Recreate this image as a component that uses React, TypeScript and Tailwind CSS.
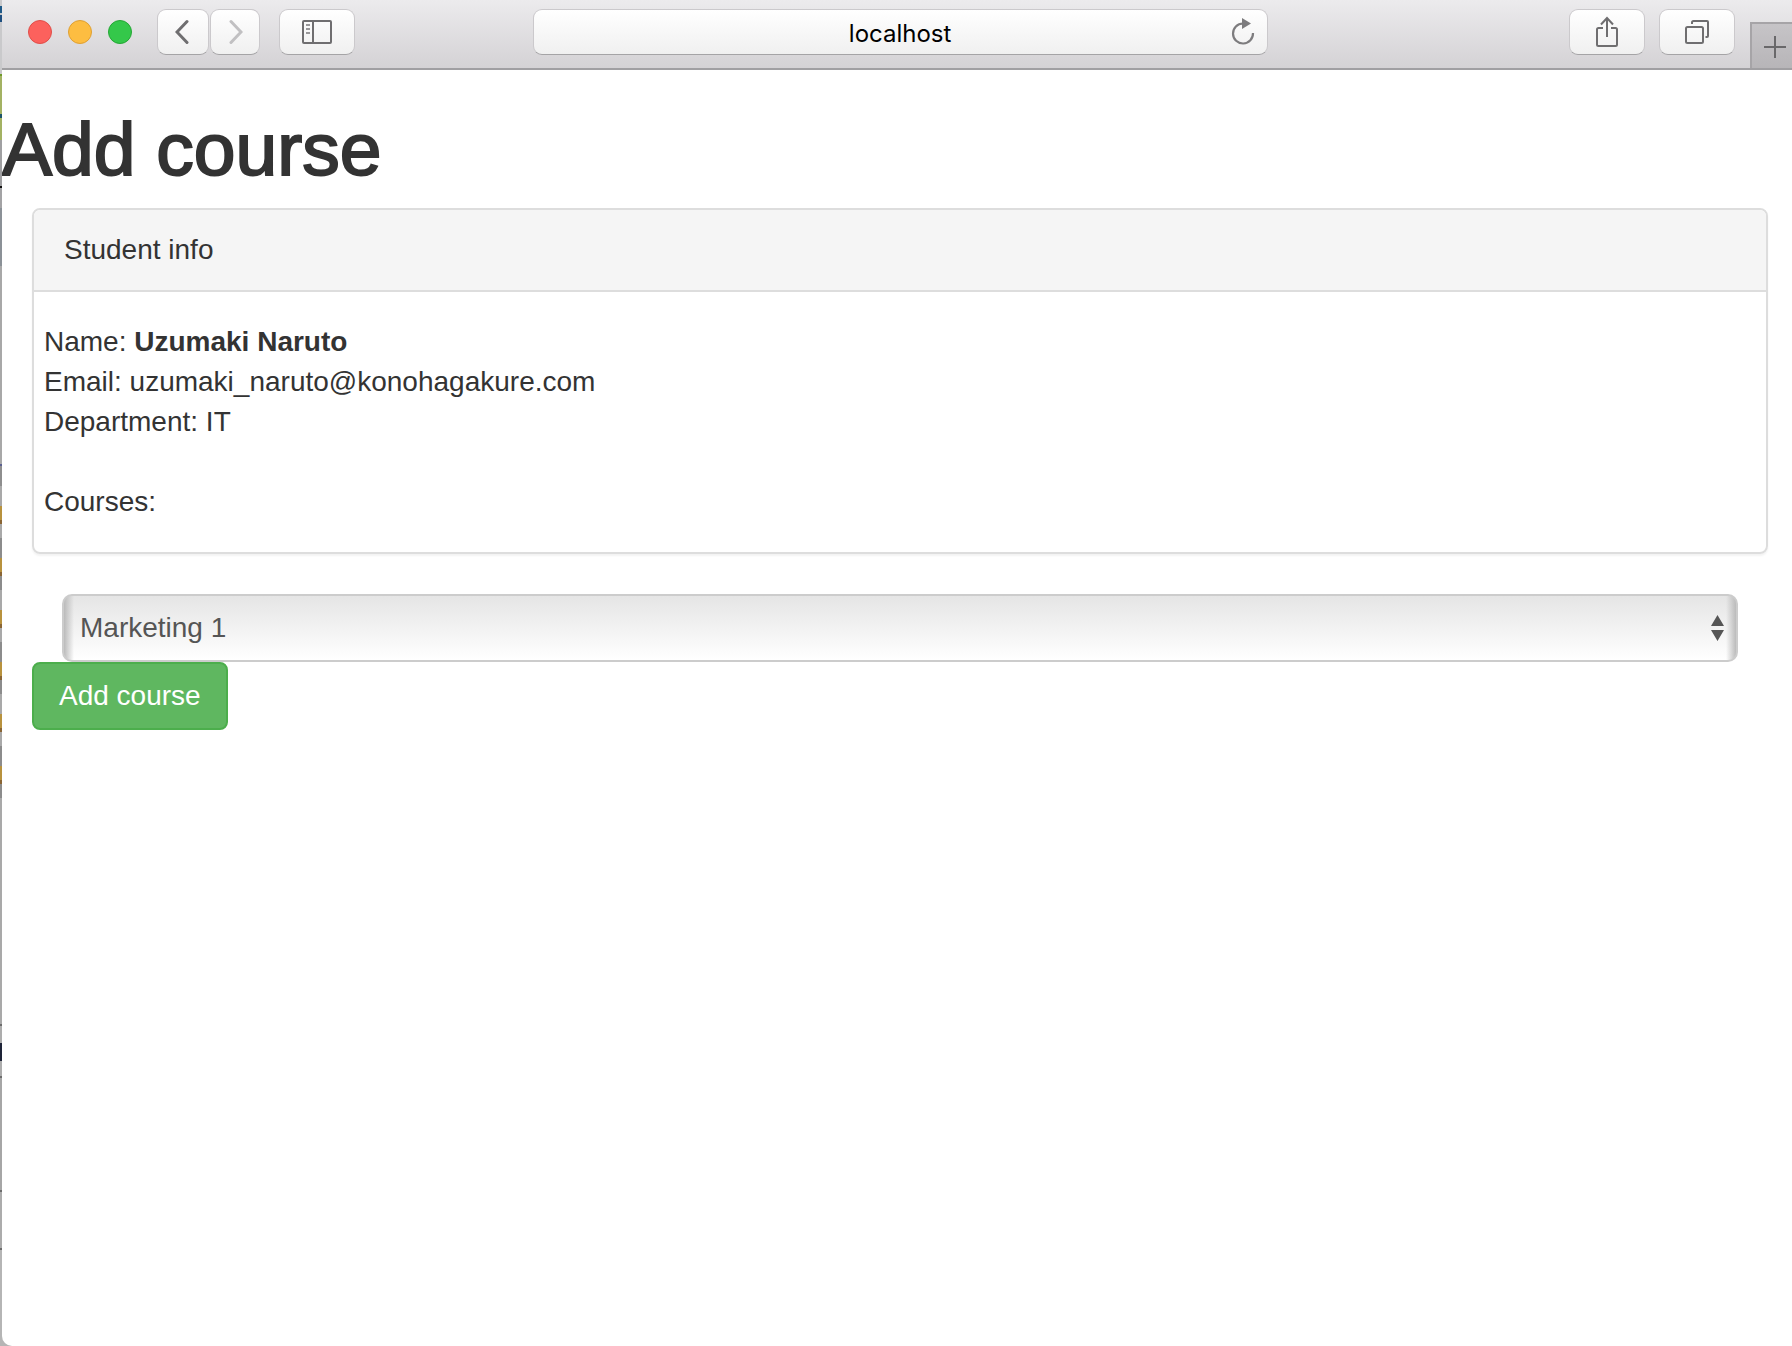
import React from "react";

const strip: [number, string][] = [
  [6, "#c9c9cb"], [7, "#1f5a88"], [2, "#c9c9cb"], [7, "#1f4f80"], [52, "#c9c9cb"], [2, "#6f9a2a"], [38, "#a3b263"], [4, "#1d5468"],
  [22, "#a3b263"], [46, "#a0a0a2"], [2, "#101010"], [20, "#a3a3a5"], [58, "#8b9197"], [198, "#a8a8a8"],
  [2, "#5a6090"], [20, "#8e8e8e"],
  [20, "#a9a9a9"], [14, "#b8923e"], [4, "#8a6534"], [14, "#a9a9a9"],
  [20, "#8c8c8c"], [14, "#b8923e"], [4, "#8a6534"], [14, "#8c8c8c"],
  [20, "#a9a9a9"], [14, "#b8923e"], [4, "#8a6534"], [14, "#a9a9a9"],
  [20, "#8c8c8c"], [14, "#b8923e"], [4, "#8a6534"], [14, "#8c8c8c"],
  [20, "#a9a9a9"], [14, "#b8923e"], [4, "#8a6534"], [14, "#a9a9a9"],
  [20, "#8c8c8c"], [14, "#b8923e"], [4, "#8a6534"], [14, "#8c8c8c"],
  [226, "#a9a9a9"], [2, "#6c6c6c"], [17, "#adadad"], [18, "#1e2438"], [15, "#adadad"], [2, "#6c6c6c"],
  [112, "#a6a6a6"], [2, "#6c6c6c"], [56, "#acacac"], [2, "#6c6c6c"],
];

const chromeButton =
  "flex h-[46px] items-center justify-center rounded-[9px] border border-[#cbc9cc] border-b-[#a5a4a6] bg-linear-to-b from-white to-[#f0f0f0] text-[#6f6e70]";

function Toolbar() {
  return (
    <header className="flex h-[70px] items-start border-b-2 border-[#a09fa2] bg-linear-to-b from-[#ecebed] to-[#d4d2d5]">
      <div className="flex gap-4 pt-5 pl-[26px]">
        <button aria-label="Close" className="size-6 rounded-full border border-[#e04e49] bg-[#fc615d]" />
        <button aria-label="Minimize" className="size-6 rounded-full border border-[#dfa033] bg-[#fdbd41]" />
        <button aria-label="Zoom" className="size-6 rounded-full border border-[#25a735] bg-[#34c84a]" />
      </div>
      <div className="ml-[25px] flex gap-px pt-[9px]">
        <button aria-label="Back" className={`${chromeButton} w-[52px]`}>
          <svg width="16" height="26" viewBox="0 0 16 26" fill="none" stroke="#6f6e70" strokeWidth="3" strokeLinecap="round"><path d="M12 2.500 2 13 12 23.500" /></svg>
        </button>
        <button aria-label="Forward" className={`${chromeButton} w-[50px]`}>
          <svg width="16" height="26" viewBox="0 0 16 26" fill="none" stroke="#c1c0c2" strokeWidth="3" strokeLinecap="round"><path d="M4 2.500 14 13 4 23.500" /></svg>
        </button>
      </div>
      <div className="ml-[19px] pt-[9px]">
        <button aria-label="Show sidebar" className={`${chromeButton} w-[76px]`}>
          <svg width="30" height="24" viewBox="0 0 30 24" fill="none" stroke="#6f6e70" strokeWidth="2">
            <rect x="1" y="1" width="28" height="22" rx="1" />
            <path d="M11 1v22" />
            <path d="M4 5h4M4 9h4M4 13h4" stroke="#99989a" />
          </svg>
        </button>
      </div>
      <div className="flex-[178]" />
      <div className={`${chromeButton} relative mt-[9px] flex-[734]`}>
        <input aria-label="Address" defaultValue="localhost" className="h-full w-full bg-transparent pt-[2px] text-center font-['Inter',sans-serif] text-[24px] text-black outline-none" />
        <button aria-label="Reload" className="absolute top-[7px] right-3 flex">
          <svg width="24" height="28" viewBox="0 0 24 28" fill="none">
            <path d="M12 6.500A10 10 0 1 0 22 16" stroke="#7d7c7e" strokeWidth="2.2" />
            <path d="M11 1v11l9-5.500z" fill="#7d7c7e" />
          </svg>
        </button>
      </div>
      <div className="flex-[302]" />
      <div className="flex gap-[14px] pt-[9px]">
        <button aria-label="Share" className={`${chromeButton} w-[76px]`}>
          <svg width="24" height="32" viewBox="0 0 24 32" fill="none" stroke="#6f6e70" strokeWidth="2">
            <path d="M8 12H3.500Q2 12 2 13.500V28.500Q2 30 3.500 30H20.500Q22 30 22 28.500V13.500Q22 12 20.500 12H16" />
            <path d="M12 21V2M6 8.500 12 2l6 6.500" />
          </svg>
        </button>
        <button aria-label="Show tabs" className={`${chromeButton} w-[76px]`}>
          <svg width="26" height="26" viewBox="0 0 26 26" fill="none" stroke="#6f6e70" strokeWidth="2">
            <rect x="2" y="8" width="17" height="16" rx="1.500" />
            <path d="M8 5V3.500Q8 2 9.500 2H23Q24 2 24 3V17Q24 18 23 18H21.500" />
          </svg>
        </button>
      </div>
      <button aria-label="New tab" className="mt-[22px] ml-[15px] flex h-[46px] w-[42px] items-center justify-end border-t-2 border-l-2 border-[#a6a4a7] bg-linear-to-b from-[#c6c4c7] to-[#b7b5b8]">
        <svg width="28" height="24" viewBox="0 0 28 24" stroke="#69686a" strokeWidth="2"><path d="M0 13h22M11 2v22" /></svg>
      </button>
    </header>
  );
}

export default function App() {
  return (
    <div className="flex h-screen min-h-screen overflow-hidden bg-[#b5b5b5] font-['Liberation_Sans',Arial,sans-serif] text-[28px] leading-10 text-[#333]">
      <div className="flex w-[2px] shrink-0 flex-col" aria-hidden="true">
        {strip.map(([height, background], i) => (
          <div key={i} className="shrink-0" style={{ height, background }} />
        ))}
      </div>
      <div className="flex min-w-0 flex-1 flex-col overflow-hidden rounded-bl-[10px] bg-white">
        <Toolbar />
        <main className="pt-10">
          <h1 className="text-[75px] leading-[78px] font-normal [-webkit-text-stroke:2px_#333]">Add course</h1>
          <div className="mt-5 mr-6 ml-[30px]">
            <section className="rounded-lg border-2 border-[#ddd] shadow-[0_2px_2px_rgba(0,0,0,0.05)]">
              <h2 className="rounded-t-md border-b-2 border-[#ddd] bg-[#f5f5f5] px-[30px] py-5">Student info</h2>
              <div className="px-[10px] py-[30px]">
                <p>Name: <b>Uzumaki Naruto</b></p>
                <p>Email: uzumaki_naruto@konohagakure.com</p>
                <p>Department: IT</p>
                <p className="mt-10">Courses:</p>
              </div>
            </section>
            <form onSubmit={(e) => e.preventDefault()} className="mt-10">
              <div className="relative mx-[30px]">
                <select aria-label="Course" className="block h-[68px] w-full appearance-none rounded-[10px] border-2 border-[#ccc] bg-[linear-gradient(to_right,#bbbbbb,#bbbbbb00_10px,#bbbbbb00_calc(100%-10px),#bbbbbb),linear-gradient(#e5e5e5,#ffffff)] px-4 text-[#555]">
                  <option>Marketing 1</option>
                </select>
                <svg className="pointer-events-none absolute top-[21px] right-[14px]" width="13" height="26" viewBox="0 0 13 26" fill="#555">
                  <path d="M6.500 0l6.500 11H0zM6.500 26l6.500-11H0z" />
                </svg>
              </div>
              <button className="block h-[68px] rounded-lg border-2 border-[#4cae4c] bg-[#5fb760] px-[25px] text-white">Add course</button>
            </form>
          </div>
        </main>
      </div>
    </div>
  );
}
